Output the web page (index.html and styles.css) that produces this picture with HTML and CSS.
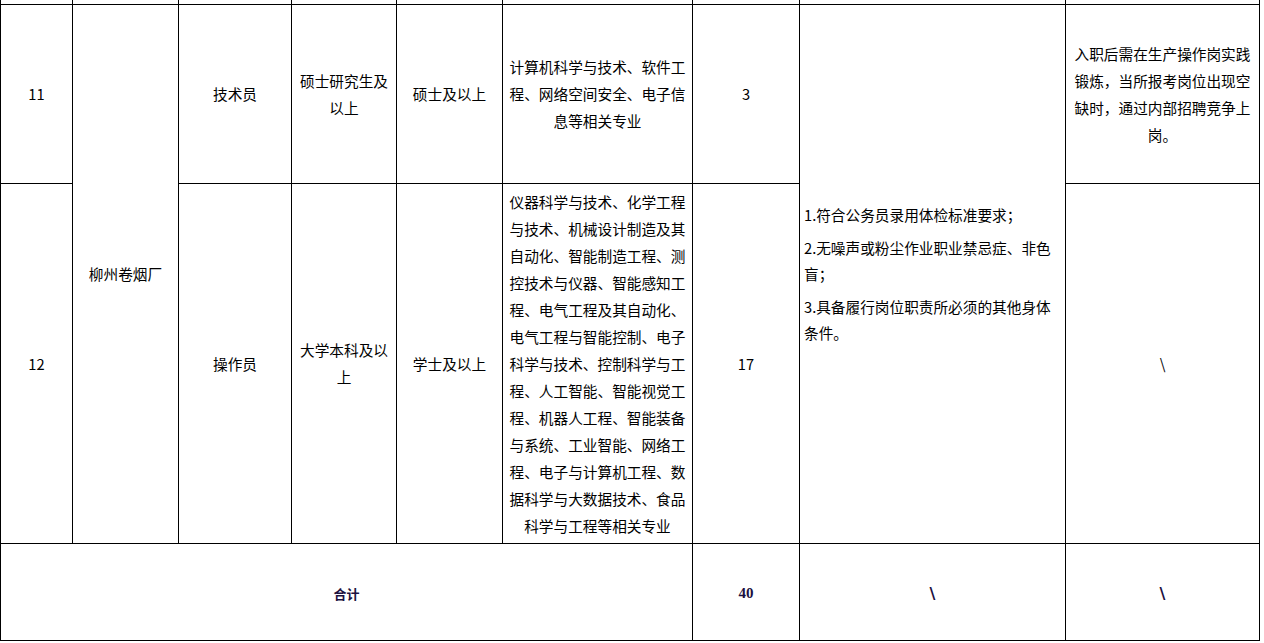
FILE: index.html
```html
<!DOCTYPE html>
<html lang="zh-CN">
<head>
<meta charset="utf-8">
<title>招聘岗位表</title>
<link rel="stylesheet" href="styles.css">
</head>
<body>
<table class="grid">
  <colgroup>
    <col class="c1"><col class="c2"><col class="c3"><col class="c4"><col class="c5"><col class="c6"><col class="c7"><col class="c8"><col class="c9">
  </colgroup>
  <tr class="r-prev">
    <td></td><td></td><td></td><td></td><td></td><td></td><td></td><td></td><td></td>
  </tr>
  <tr class="r11">
    <td>11</td>
    <td rowspan="2">柳州卷烟厂</td>
    <td>技术员</td>
    <td>硕士研究生及以上</td>
    <td>硕士及以上</td>
    <td class="major">计算机科学与技术、软件工程、网络空间安全、电子信息等相关专业</td>
    <td>3</td>
    <td rowspan="2" class="req">
      <p>1.符合公务员录用体检标准要求；</p>
      <p>2.无噪声或粉尘作业职业禁忌症、非色盲；</p>
      <p>3.具备履行岗位职责所必须的其他身体条件。</p>
    </td>
    <td class="note">入职后需在生产操作岗实践锻炼，当所报考岗位出现空缺时，通过内部招聘竞争上岗。</td>
  </tr>
  <tr class="r12">
    <td>12</td>
    <td>操作员</td>
    <td>大学本科及以上</td>
    <td>学士及以上</td>
    <td class="major">仪器科学与技术、化学工程与技术、机械设计制造及其自动化、智能制造工程、测控技术与仪器、智能感知工程、电气工程及其自动化、电气工程与智能控制、电子科学与技术、控制科学与工程、人工智能、智能视觉工程、机器人工程、智能装备与系统、工业智能、网络工程、电子与计算机工程、数据科学与大数据技术、食品科学与工程等相关专业</td>
    <td>17</td>
    <td class="note">\</td>
  </tr>
  <tr class="total">
    <td colspan="6" class="label">合计</td>
    <td class="num">40</td>
    <td class="num slash">\</td>
    <td class="num slash">\</td>
  </tr>
</table>
</body>
</html>
```

FILE: styles.css
```css
html, body {
  margin: 0;
  padding: 0;
  background: #ffffff;
}

body {
  font-family: "Noto Sans CJK SC", "Noto Sans", sans-serif;
  font-size: 14.67px;
  color: #000000;
}

.grid {
  border-collapse: collapse;
  table-layout: fixed;
  width: 1260px;
}

.c1 { width: 72px; }
.c2 { width: 106px; }
.c3 { width: 113px; }
.c4 { width: 105px; }
.c5 { width: 106px; }
.c6 { width: 190px; }
.c7 { width: 107px; }
.c8 { width: 266px; }
.c9 { width: 194px; }

.grid td {
  border: 1px solid #000000;
  padding: 0 6px;
  text-align: center;
  vertical-align: middle;
  line-height: 27px;
  word-break: break-all;
}

.r-prev td {
  border-top: none;
  padding: 0;
  line-height: 0;
  font-size: 0;
}

.r-prev { height: 4px; }
.r11 { height: 179px; }
.r12 { height: 360px; }
.total { height: 97px; }

.grid td.req {
  text-align: left;
  padding: 0 4px;
  line-height: 26px;
}

.req p {
  margin: 7px 0;
}

.grid td.note {
  padding: 0 7px;
}

.total td {
  font-weight: bold;
  color: #1b1040;
  padding-top: 4px;
}

.total td.label {
  font-size: 13px;
}

.total td.num {
  font-family: "Liberation Serif", "Times New Roman", serif;
  font-size: 15px;
}

.total td.slash {
  font-family: "DejaVu Sans", sans-serif;
  font-size: 16px;
  font-weight: bold;
}
```
